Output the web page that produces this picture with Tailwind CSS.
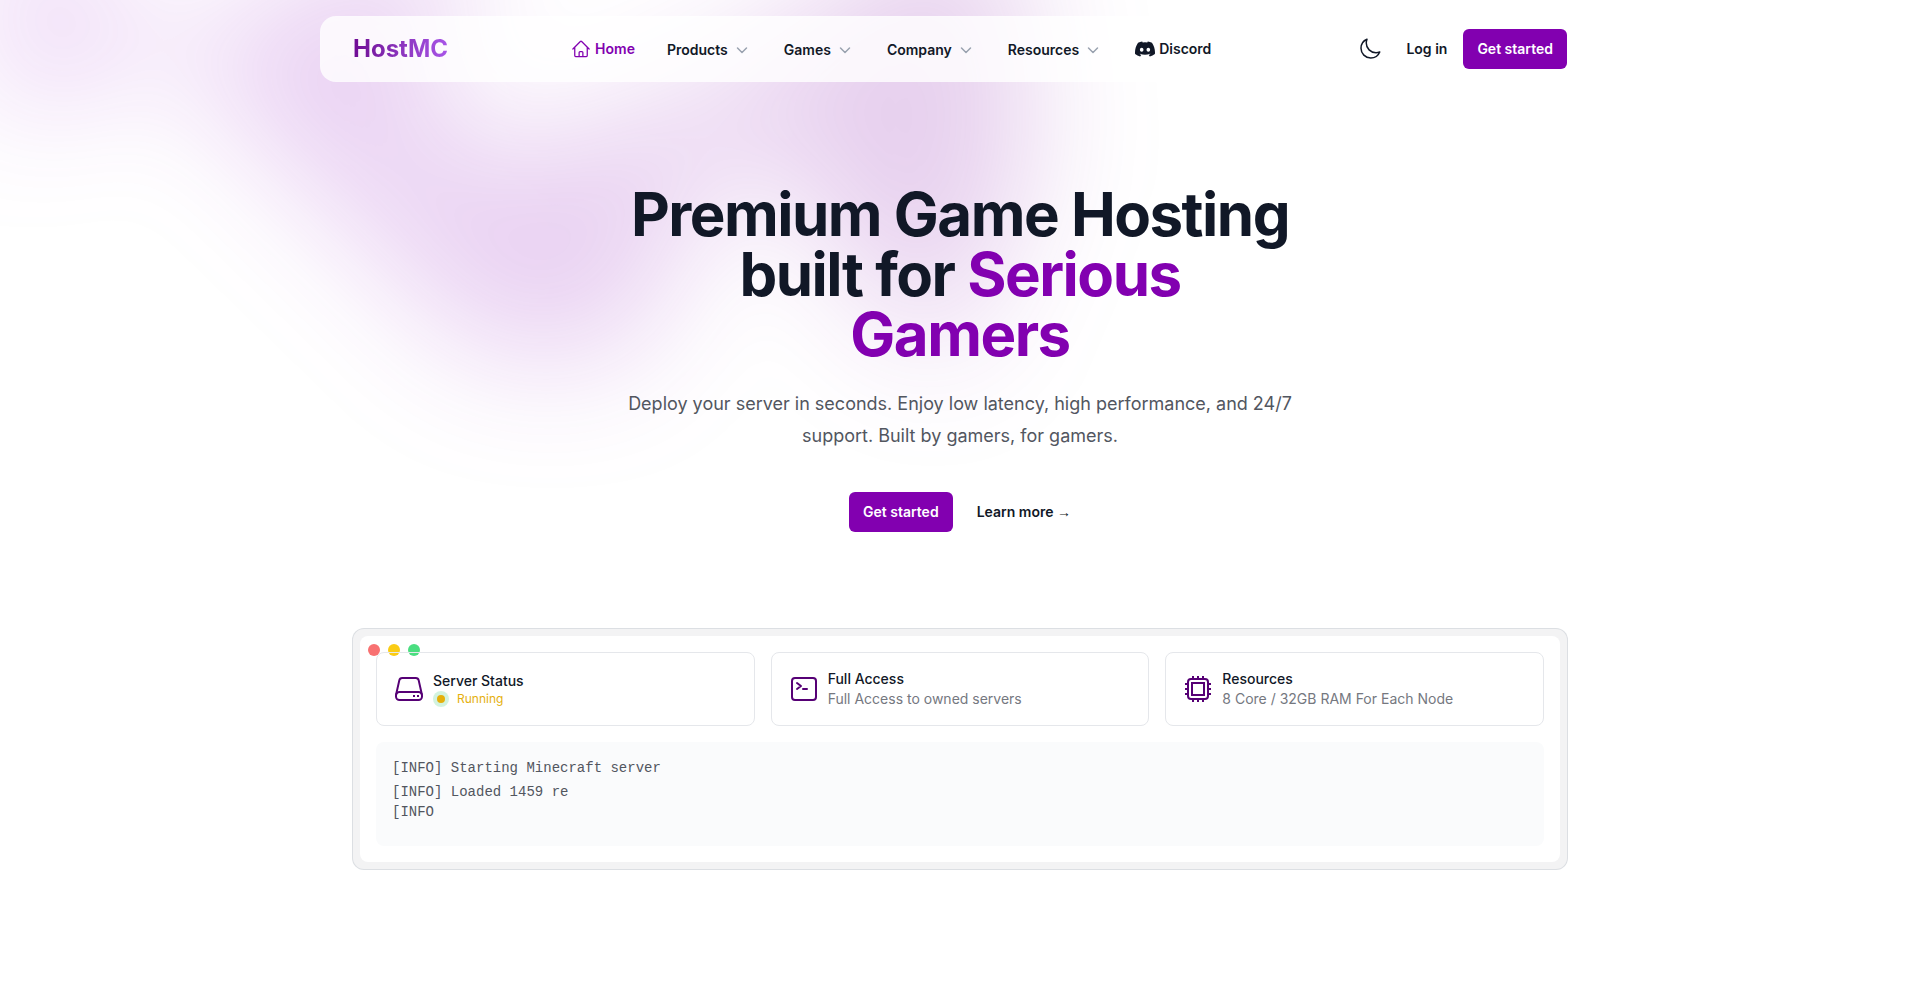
<!DOCTYPE html>
<html lang="en">
<head>
    <meta charset="UTF-8" />
    <meta name="viewport" content="width=device-width, initial-scale=1.0" />
    <title>HostMC</title>
    <script src="https://cdn.jsdelivr.net/npm/@tailwindcss/browser@4"></script>
</head>
<body class="min-h-screen overflow-x-hidden bg-white font-['Inter',sans-serif] text-[#111827]">
<div class="relative isolate">

    <!-- Background glow -->
    <div class="absolute inset-x-0 -top-80 -z-10 overflow-hidden blur-3xl" aria-hidden="true">
        <div class="relative left-[calc(50%-30rem)] aspect-[1155/678] w-[1155px] -translate-x-1/2 rotate-30 bg-linear-to-tr from-[#a020d8] to-[#7c0a9c] opacity-20 [clip-path:polygon(74.1%_44.1%,100%_61.6%,97.5%_26.9%,85.5%_0.1%,80.7%_2%,72.5%_32.5%,60.2%_62.4%,52.4%_68.1%,47.5%_58.3%,45.2%_34.5%,27.5%_76.7%,0.1%_64.9%,17.9%_100%,27.6%_76.8%,76.1%_97.7%,74.1%_44.1%)]"></div>
    </div>

    <header class="pt-4">
        <nav class="mx-auto flex h-[66px] max-w-7xl items-center justify-between rounded-2xl border border-white/10 bg-white/80 px-8 text-sm font-semibold" aria-label="Global">
            <a href="#" class="bg-linear-to-r from-[#6f0a94] to-[#a855e8] bg-clip-text text-2xl font-bold text-transparent">HostMC</a>

            <div class="flex items-center gap-8">
                <a href="#" class="flex items-center gap-1 text-[#8200b0]">
                    <svg class="size-5" fill="none" viewBox="0 0 24 24" stroke-width="1.5" stroke="currentColor">
                        <path stroke-linecap="round" stroke-linejoin="round" d="m2.25 12 8.954-8.955c.44-.439 1.152-.439 1.591 0L21.75 12M4.5 9.75v10.125c0 .621.504 1.125 1.125 1.125H9.75v-4.875c0-.621.504-1.125 1.125-1.125h2.25c.621 0 1.125.504 1.125 1.125V21h4.125c.621 0 1.125-.504 1.125-1.125V9.75M8.25 21h8.25" />
                    </svg>
                    Home
                </a>
                <button type="button" class="flex items-center gap-1 pt-0.5">
                    Products
                    <svg class="size-5 text-gray-400" fill="none" viewBox="0 0 20 20" stroke="currentColor" stroke-width="1.5"><path stroke-linecap="round" stroke-linejoin="round" d="m5.5 8 4.5 4.5L14.5 8" /></svg>
                </button>
                <button type="button" class="flex items-center gap-1 pt-0.5">
                    Games
                    <svg class="size-5 text-gray-400" fill="none" viewBox="0 0 20 20" stroke="currentColor" stroke-width="1.5"><path stroke-linecap="round" stroke-linejoin="round" d="m5.5 8 4.5 4.5L14.5 8" /></svg>
                </button>
                <button type="button" class="flex items-center gap-1 pt-0.5">
                    Company
                    <svg class="size-5 text-gray-400" fill="none" viewBox="0 0 20 20" stroke="currentColor" stroke-width="1.5"><path stroke-linecap="round" stroke-linejoin="round" d="m5.5 8 4.5 4.5L14.5 8" /></svg>
                </button>
                <button type="button" class="flex items-center gap-1 pt-0.5">
                    Resources
                    <svg class="size-5 text-gray-400" fill="none" viewBox="0 0 20 20" stroke="currentColor" stroke-width="1.5"><path stroke-linecap="round" stroke-linejoin="round" d="m5.5 8 4.5 4.5L14.5 8" /></svg>
                </button>
                <a href="#" class="flex items-center gap-1">
                    <svg class="size-5" viewBox="0 0 24 24" fill="currentColor">
                        <path d="M20.317 4.37a19.79 19.79 0 0 0-4.885-1.515.074.074 0 0 0-.079.037c-.21.375-.444.864-.608 1.25a18.27 18.27 0 0 0-5.487 0 12.64 12.64 0 0 0-.617-1.25.077.077 0 0 0-.079-.037A19.736 19.736 0 0 0 3.677 4.37a.07.07 0 0 0-.032.027C.533 9.046-.32 13.58.099 18.057a.082.082 0 0 0 .031.057 19.9 19.9 0 0 0 5.993 3.03.078.078 0 0 0 .084-.028c.462-.63.874-1.295 1.226-1.994a.076.076 0 0 0-.041-.106 13.1 13.1 0 0 1-1.872-.892.077.077 0 0 1-.008-.128c.126-.094.252-.192.372-.292a.074.074 0 0 1 .077-.01c3.928 1.793 8.18 1.793 12.062 0a.074.074 0 0 1 .078.01c.12.098.246.198.373.292a.077.077 0 0 1-.006.127 12.3 12.3 0 0 1-1.873.892.077.077 0 0 0-.041.107c.36.698.772 1.362 1.225 1.993a.076.076 0 0 0 .084.028 19.84 19.84 0 0 0 6.002-3.03.077.077 0 0 0 .032-.054c.5-5.177-.838-9.674-3.549-13.66a.061.061 0 0 0-.031-.03zM8.02 15.33c-1.183 0-2.157-1.085-2.157-2.419 0-1.333.956-2.419 2.157-2.419 1.21 0 2.176 1.096 2.157 2.42 0 1.333-.956 2.418-2.157 2.418zm7.975 0c-1.183 0-2.157-1.085-2.157-2.419 0-1.333.955-2.419 2.157-2.419 1.21 0 2.176 1.096 2.157 2.42 0 1.333-.946 2.418-2.157 2.418z" />
                    </svg>
                    Discord
                </a>
            </div>

            <div class="flex items-center gap-4 pl-4">
                <button type="button" class="p-2" aria-label="Toggle dark mode">
                    <svg class="size-6" fill="none" viewBox="0 0 24 24" stroke-width="1.5" stroke="currentColor">
                        <path stroke-linecap="round" stroke-linejoin="round" d="M21.752 15.002A9.72 9.72 0 0 1 18 15.75c-5.385 0-9.75-4.365-9.75-9.75 0-1.33.266-2.597.748-3.752A9.753 9.753 0 0 0 3 11.25C3 16.635 7.365 21 12.75 21a9.753 9.753 0 0 0 9.002-5.998Z" />
                    </svg>
                </button>
                <a href="#">Log in</a>
                <a href="#" class="rounded-md bg-[#8200b0] px-3.5 py-2.5 text-white">Get started</a>
            </div>
        </nav>
    </header>

    <main class="mx-auto max-w-7xl px-8 pt-[102px] pb-24">
        <section class="mx-auto max-w-2xl text-center">
            <h1 class="text-6xl leading-none font-bold tracking-tight">
                Premium Game Hosting built for <span class="text-[#8200b0]">Serious Gamers</span>
            </h1>
            <p class="mt-6 text-lg leading-8 text-[#52565f]">
                Deploy your server in seconds. Enjoy low latency, high performance, and 24/7 support. Built by gamers, for gamers.
            </p>
            <div class="mt-10 flex items-center justify-center gap-6 text-sm font-semibold">
                <a href="#" class="rounded-md bg-[#8200b0] px-3.5 py-2.5 text-white">Get started</a>
                <a href="#">Learn more <span class="font-['Liberation_Sans',sans-serif]" aria-hidden="true">→</span></a>
            </div>
        </section>

        <!-- Server panel preview -->
        <section class="mt-24 rounded-xl border border-gray-300/70 bg-gray-900/5 p-[7px]">
            <div class="relative rounded-lg bg-white p-4">
                <div class="absolute top-2 left-2 flex gap-2" aria-hidden="true">
                    <span class="size-3 rounded-full bg-[#f87171]"></span>
                    <span class="size-3 rounded-full bg-[#facc15]"></span>
                    <span class="size-3 rounded-full bg-[#4ade80]"></span>
                </div>

                <div class="relative grid grid-cols-3 gap-4 text-sm">
                    <div class="flex items-center gap-2 rounded-lg border border-gray-200 p-4">
                        <svg class="size-8 text-[#560075]" fill="none" viewBox="0 0 32 32" stroke="currentColor" stroke-width="2">
                            <rect x="3" y="19" width="26" height="8" rx="3.5" />
                            <path stroke-linejoin="round" d="M3 22 6.3 7.4A3 3 0 0 1 9.2 5h13.6a3 3 0 0 1 2.9 2.4L29 22" />
                            <path d="M20 23h2M24 23h2" />
                        </svg>
                        <div>
                            <h2 class="font-medium">Server Status</h2>
                            <p class="flex items-center gap-2 text-xs text-[#e5b00c]">
                                <span class="rounded-full bg-[#22c55e]/20 p-1"><span class="block size-2 rounded-full bg-[#e5b00c]"></span></span>
                                Running
                            </p>
                        </div>
                    </div>
                    <div class="flex items-center gap-2 rounded-lg border border-gray-200 p-4">
                        <svg class="size-8 text-[#560075]" fill="none" viewBox="0 0 32 32" stroke="currentColor" stroke-width="2">
                            <rect x="4" y="5" width="24" height="22" rx="3" />
                            <path stroke-linecap="round" stroke-linejoin="round" d="m9 10 4 3-4 3M15 16h4" />
                        </svg>
                        <div>
                            <h2 class="font-medium">Full Access</h2>
                            <p class="text-[#75787f]">Full Access to owned servers</p>
                        </div>
                    </div>
                    <div class="flex items-center gap-2 rounded-lg border border-gray-200 p-4">
                        <svg class="size-8 text-[#560075]" fill="none" viewBox="0 0 32 32" stroke="currentColor" stroke-width="2">
                            <rect x="6" y="6" width="20" height="20" rx="3" />
                            <rect x="10" y="10" width="12" height="12" />
                            <path d="M11 3v3m5-3v3m5-3v3M11 26v3m5-3v3m5-3v3M3 11h3m-3 5h3m-3 5h3M26 11h3m-3 5h3m-3 5h3" />
                        </svg>
                        <div>
                            <h2 class="font-medium">Resources</h2>
                            <p class="text-[#75787f]">8 Core / 32GB RAM For Each Node</p>
                        </div>
                    </div>
                </div>

                <div class="mt-4 rounded-lg bg-[#fafbfc] px-4 pt-4 pb-6 font-['Liberation_Mono',monospace] text-sm text-[#52565f]">
                    <p class="mb-1">[INFO] Starting Minecraft server</p>
                    <p>[INFO] Loaded 1459 re</p>
                    <p>[INFO</p>
                </div>
            </div>
        </section>
    </main>
</div>
</body>
</html>
